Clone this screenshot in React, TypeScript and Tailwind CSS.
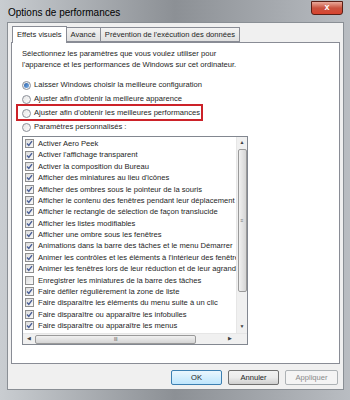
import React from 'react';

const items: [string, boolean][] = [
  ['Activer Aero Peek', true],
  ["Activer l'affichage transparent", true],
  ['Activer la composition du Bureau', true],
  ["Afficher des miniatures au lieu d'icônes", true],
  ['Afficher des ombres sous le pointeur de la souris', true],
  ['Afficher le contenu des fenêtres pendant leur déplacement', true],
  ['Afficher le rectangle de sélection de façon translucide', true],
  ['Afficher les listes modifiables', true],
  ['Afficher une ombre sous les fenêtres', true],
  ['Animations dans la barre des tâches et le menu Démarrer', true],
  ["Animer les contrôles et les éléments à l'intérieur des fenêtres", true],
  ['Animer les fenêtres lors de leur réduction et de leur agrandissement', true],
  ['Enregistrer les miniatures de la barre des tâches', false],
  ['Faire défiler régulièrement la zone de liste', true],
  ['Faire disparaître les éléments du menu suite à un clic', true],
  ['Faire disparaître ou apparaître les infobulles', true],
  ['Faire disparaître ou apparaître les menus', true],
];

const Radio = ({ on, label }: { on?: boolean; label: string }) => (
  <div className="flex items-center h-[14px] gap-[3px]">
    <span className="w-[9px] h-[9px] rounded-full border border-[#8c9099] bg-gradient-to-br from-[#e6e6e6] to-[#fbfbfb] flex items-center justify-center">
      {on && <span className="w-[5px] h-[5px] rounded-full bg-gradient-to-br from-[#2a5fa8] to-[#7fb3e8]" />}
    </span>
    <span>{label}</span>
  </div>
);

const Check = ({ on }: { on: boolean }) => (
  <span className="w-[9px] h-[9px] shrink-0 border border-[#8f8f8f] bg-gradient-to-br from-[#dcdcdc] to-[#fafafa] flex items-center justify-center">
    {on && (
      <svg width="7" height="7" viewBox="0 0 7 7">
        <path d="M1 3.6 L2.8 5.4 L6 1.2" fill="none" stroke="#4a5f97" strokeWidth="1.4" />
      </svg>
    )}
  </span>
);

export default function App() {
  return (
    <div
      className="w-[350px] h-[400px] overflow-hidden bg-gradient-to-r from-[#c9cdd1] via-[#8c9095] to-[#b9bdc2] text-[7.6px] text-[#1e1e1e] flex flex-col"
      style={{ fontFamily: '"Liberation Sans", Arial, sans-serif' }}
    >
      {/* title bar */}
      <div className="h-[22px] flex items-start justify-between pl-[8px] pr-[7px]">
        <span className="text-[10px] text-black mt-[5px]">Options de performances</span>
        <button className="mt-[1px] w-[32px] h-[14px] rounded-b-[3px] border border-[#5a1f16] bg-gradient-to-b from-[#e9a99b] via-[#c9523f] to-[#d8432e] flex items-center justify-center text-white text-[9px] font-bold">
          x
        </button>
      </div>

      {/* client area */}
      <div className="ml-[7px] mr-[6px] h-[368px] bg-[#f0f0f0] border border-[#8a8f95] px-[3px] pt-[2px] flex flex-col">
        {/* tabs */}
        <div className="flex items-end h-[17px] pl-[1px]">
          <div className="h-[17px] px-[4px] bg-white border border-b-0 border-[#898c95] flex items-center relative z-10 -mb-px">
            Effets visuels
          </div>
          <div className="h-[15px] px-[4px] bg-gradient-to-b from-[#f3f3f3] to-[#e0e0e0] border border-l-0 border-[#898c95] flex items-center">
            Avancé
          </div>
          <div className="h-[15px] px-[4px] bg-gradient-to-b from-[#f3f3f3] to-[#e0e0e0] border border-l-0 border-[#898c95] flex items-center">
            Prévention de l'exécution des données
          </div>
        </div>

        {/* tab panel */}
        <div className="h-[322px] bg-white border border-[#898c95] pl-[10px] pt-[5px] flex flex-col">
          <p className="leading-[11px] w-[230px]">
            Sélectionnez les paramètres que vous voulez utiliser pour
            <br />
            l'apparence et les performances de Windows sur cet ordinateur.
          </p>

          <div className="mt-[8px] flex flex-col">
            <Radio on label="Laisser Windows choisir la meilleure configuration" />
            <Radio label="Ajuster afin d'obtenir la meilleure apparence" />
            <div className="relative">
              <Radio label="Ajuster afin d'obtenir les meilleures performances" />
              <div className="absolute left-[-6px] top-[-2px] w-[187px] h-[17px] border-2 border-[#cc2229]" />
            </div>
            <Radio label="Paramètres personnalisés :" />
          </div>

          {/* list box */}
          <div className="mt-[2px] w-[226px] h-[209px] border border-[#828790] flex flex-col">
            <div className="flex flex-1 min-h-0">
              <div className="flex-1 overflow-hidden pt-[1px] pl-[2px]">
                {items.map(([label, on]) => (
                  <div key={label} className="h-[11.375px] flex items-center gap-[4px] whitespace-nowrap">
                    <Check on={on} />
                    <span>{label}</span>
                  </div>
                ))}
              </div>
              {/* vertical scrollbar */}
              <div className="w-[11px] bg-[#f0f0f0] border-l border-[#e6e6e6] flex flex-col items-center">
                <span className="h-[12px] text-[5px] text-[#404040] flex items-center">▲</span>
                <div className="w-[9px] h-[143px] rounded-[2px] border border-[#9a9a9a] bg-gradient-to-r from-[#f1f1f1] to-[#d5d5d5] flex items-center justify-center">
                  <span className="text-[5px] text-[#777] leading-none">≡</span>
                </div>
                <div className="flex-1" />
                <span className="h-[12px] text-[5px] text-[#404040] flex items-center">▼</span>
              </div>
            </div>
            {/* horizontal scrollbar */}
            <div className="h-[11px] flex bg-[#f0f0f0] border-t border-[#e6e6e6]">
              <div className="flex-1 flex items-center">
                <span className="w-[12px] text-[5px] text-[#404040] text-center">◀</span>
                <div className="w-[161px] h-[9px] rounded-[2px] border border-[#9a9a9a] bg-gradient-to-b from-[#f1f1f1] to-[#d5d5d5] flex items-center justify-center">
                  <span className="text-[6px] text-[#777] leading-none tracking-[-0.5px]">III</span>
                </div>
                <div className="flex-1" />
                <span className="w-[12px] text-[5px] text-[#404040] text-center">▶</span>
              </div>
              <div className="w-[11px] bg-[#f0f0f0]" />
            </div>
          </div>
        </div>

        {/* buttons */}
        <div className="flex justify-end gap-[6px] mt-[6px] pr-[2px]">
          <button className="w-[51px] h-[15px] rounded-[2px] border border-[#3c7fb1] bg-gradient-to-b from-[#eaf6fd] to-[#bee6fd] text-[#1e1e1e]">
            OK
          </button>
          <button className="w-[51px] h-[15px] rounded-[2px] border border-[#707070] bg-gradient-to-b from-[#f2f2f2] via-[#ebebeb] to-[#cfcfcf] text-[#1e1e1e]">
            Annuler
          </button>
          <button className="w-[53px] h-[15px] rounded-[2px] border border-[#adb2b5] bg-[#f4f4f4] text-[#8a8a8a]">
            Appliquer
          </button>
        </div>
      </div>
    </div>
  );
}
